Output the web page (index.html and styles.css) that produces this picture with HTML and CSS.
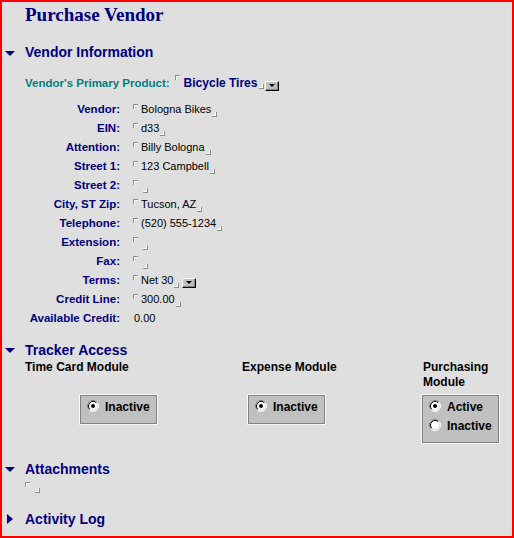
FILE: index.html
```html
<!DOCTYPE html>
<html>
<head>
<meta charset="utf-8">
<title>Purchase Vendor</title>
<link rel="stylesheet" href="styles.css">
</head>
<body>
<div class="page">
  <h1 class="title">Purchase Vendor</h1>

  <div class="sec-head sec-vendor"><span class="tri-down"></span><h2>Vendor Information</h2></div>
  <div class="product-row indent">
    <span class="product-label">Vendor's Primary Product:</span>
    <span class="m-start p-start"></span>
    <span class="product-value">Bicycle Tires</span>
    <span class="m-end p-end"></span>
    <span class="dd p-dd"></span>
  </div>

  <div class="form indent">
    <div class="lbl">Vendor:</div>
    <div class="val"><span class="m-start"></span><span class="txt">Bologna Bikes</span><span class="m-end"></span></div>
    <div class="lbl">EIN:</div>
    <div class="val"><span class="m-start"></span><span class="txt">d33</span><span class="m-end"></span></div>
    <div class="lbl">Attention:</div>
    <div class="val"><span class="m-start"></span><span class="txt">Billy Bologna</span><span class="m-end"></span></div>
    <div class="lbl">Street 1:</div>
    <div class="val"><span class="m-start"></span><span class="txt">123 Campbell</span><span class="m-end"></span></div>
    <div class="lbl">Street 2:</div>
    <div class="val"><span class="m-start"></span><span class="m-end empty"></span></div>
    <div class="lbl">City, ST Zip:</div>
    <div class="val"><span class="m-start"></span><span class="txt">Tucson, AZ</span><span class="m-end"></span></div>
    <div class="lbl">Telephone:</div>
    <div class="val"><span class="m-start"></span><span class="txt">(520) 555-1234</span><span class="m-end"></span></div>
    <div class="lbl">Extension:</div>
    <div class="val"><span class="m-start"></span><span class="m-end empty"></span></div>
    <div class="lbl">Fax:</div>
    <div class="val"><span class="m-start"></span><span class="m-end empty"></span></div>
    <div class="lbl">Terms:</div>
    <div class="val"><span class="m-start"></span><span class="txt">Net 30</span><span class="m-end"></span><span class="dd t-dd"></span></div>
    <div class="lbl">Credit Line:</div>
    <div class="val"><span class="m-start"></span><span class="txt">300.00</span><span class="m-end"></span></div>
    <div class="lbl">Available Credit:</div>
    <div class="val"><span class="txt plain">0.00</span></div>
  </div>

  <div class="sec-head sec-tracker"><span class="tri-down"></span><h2>Tracker Access</h2></div>
  <div class="modules indent">
    <div class="mod-head">Time Card Module</div>
    <div class="mod-head">Expense Module</div>
    <div class="mod-head mod3">Purchasing Module</div>

    <div class="rbox box1">
      <div class="ropt">
        <svg class="radio" width="12" height="12" viewBox="0 0 12 12"><circle cx="6" cy="6" r="5" fill="#fff"/><path d="M2.11 9.89A5.5 5.5 0 0 1 9.89 2.11" stroke="#808080" fill="none"/><path d="M9.89 2.11A5.5 5.5 0 0 1 2.11 9.89" stroke="#fff" fill="none"/><path d="M2.82 9.18A4.5 4.5 0 0 1 9.18 2.82" stroke="#000" fill="none"/><path d="M9.18 2.82A4.5 4.5 0 0 1 2.82 9.18" stroke="#dfdfdf" fill="none"/><circle cx="6" cy="6" r="2" fill="#000"/></svg>
        <span>Inactive</span>
      </div>
    </div>
    <div class="rbox box2">
      <div class="ropt">
        <svg class="radio" width="12" height="12" viewBox="0 0 12 12"><circle cx="6" cy="6" r="5" fill="#fff"/><path d="M2.11 9.89A5.5 5.5 0 0 1 9.89 2.11" stroke="#808080" fill="none"/><path d="M9.89 2.11A5.5 5.5 0 0 1 2.11 9.89" stroke="#fff" fill="none"/><path d="M2.82 9.18A4.5 4.5 0 0 1 9.18 2.82" stroke="#000" fill="none"/><path d="M9.18 2.82A4.5 4.5 0 0 1 2.82 9.18" stroke="#dfdfdf" fill="none"/><circle cx="6" cy="6" r="2" fill="#000"/></svg>
        <span>Inactive</span>
      </div>
    </div>
    <div class="rbox box3">
      <div class="ropt">
        <svg class="radio" width="12" height="12" viewBox="0 0 12 12"><circle cx="6" cy="6" r="5" fill="#fff"/><path d="M2.11 9.89A5.5 5.5 0 0 1 9.89 2.11" stroke="#808080" fill="none"/><path d="M9.89 2.11A5.5 5.5 0 0 1 2.11 9.89" stroke="#fff" fill="none"/><path d="M2.82 9.18A4.5 4.5 0 0 1 9.18 2.82" stroke="#000" fill="none"/><path d="M9.18 2.82A4.5 4.5 0 0 1 2.82 9.18" stroke="#dfdfdf" fill="none"/><circle cx="6" cy="6" r="2" fill="#000"/></svg>
        <span>Active</span>
      </div>
      <div class="ropt">
        <svg class="radio" width="12" height="12" viewBox="0 0 12 12"><circle cx="6" cy="6" r="5" fill="#fff"/><path d="M2.11 9.89A5.5 5.5 0 0 1 9.89 2.11" stroke="#808080" fill="none"/><path d="M9.89 2.11A5.5 5.5 0 0 1 2.11 9.89" stroke="#fff" fill="none"/><path d="M2.82 9.18A4.5 4.5 0 0 1 9.18 2.82" stroke="#000" fill="none"/><path d="M9.18 2.82A4.5 4.5 0 0 1 2.82 9.18" stroke="#dfdfdf" fill="none"/></svg>
        <span>Inactive</span>
      </div>
    </div>
  </div>

  <div class="sec-head sec-attach"><span class="tri-down"></span><h2>Attachments</h2></div>
  <div class="attach-row indent"><span class="m-start a-start"></span><span class="m-end a-end"></span></div>

  <div class="sec-head sec-log"><span class="tri-right"></span><h2>Activity Log</h2></div>
</div>
</body>
</html>
```

FILE: styles.css
```css
body {
  margin: 0;
  background: #dfdfdf;
}

.page {
  width: 514px;
  height: 538px;
  box-sizing: border-box;
  border: 2px solid #ff0000;
  background: #dfdfdf;
  padding-left: 3px;
  font-family: "Liberation Sans", Arial, sans-serif;
  overflow: hidden;
}

.indent {
  margin-left: 20px;
}

.title {
  margin: 2px 0 0 20px;
  font: bold 19px/22px "Liberation Serif", "Times New Roman", serif;
  color: #000080;
}

/* section headings */
.sec-head {
  display: flex;
  align-items: flex-start;
  height: 18px;
}
.sec-head h2 {
  margin: 0;
  font: bold 14px/18px "Liberation Sans", Arial, sans-serif;
  color: #000080;
}
.tri-down {
  width: 0;
  height: 0;
  border-left: 5px solid transparent;
  border-right: 5px solid transparent;
  border-top: 5px solid #000080;
  margin: 7px 10px 0 0;
}
.tri-right {
  width: 0;
  height: 0;
  border-top: 5.5px solid transparent;
  border-bottom: 5.5px solid transparent;
  border-left: 6px solid #000080;
  margin: 4px 12px 0 2px;
}
.sec-vendor { margin-top: 17px; }
.sec-vendor .tri-down { margin-top: 8px; }
.sec-tracker { margin-top: 13px; }
.sec-attach { margin-top: 16px; }
.sec-log { margin-top: 13px; }

/* field markers */
.m-start {
  display: block;
  flex: none;
  width: 4px;
  height: 4px;
  border-top: 1px solid #8c8c8c;
  border-left: 1px solid #8c8c8c;
  box-shadow: inset 1px 1px 0 #ffffff;
  margin: 4px 3px 0 0;
}
.m-end {
  display: block;
  flex: none;
  width: 4px;
  height: 4px;
  border-bottom: 1px solid #8c8c8c;
  border-right: 1px solid #8c8c8c;
  box-shadow: inset -1px -1px 0 #ffffff;
  margin: 12px 0 0 1px;
}
.m-end.empty { margin-left: 2px; }

/* dropdown button */
.dd {
  display: flex;
  flex: none;
  align-items: center;
  justify-content: center;
  width: 14px;
  height: 10px;
  box-sizing: border-box;
  background: #c0c0c0;
  border: 1px solid;
  border-color: #ffffff #000000 #000000 #ffffff;
  box-shadow: inset -1px -1px 0 #808080;
  margin-left: 2px;
}
.dd::after {
  content: "";
  width: 0;
  height: 0;
  border-left: 3px solid transparent;
  border-right: 3px solid transparent;
  border-top: 3px solid #000000;
  margin: 0 1px 1px 0;
}
.p-dd { margin-top: 7px; margin-left: 1px; }
.t-dd { margin-top: 7px; margin-left: 3px; }

/* primary product */
.product-row {
  display: flex;
  align-items: flex-start;
  height: 19px;
  margin-top: 13px;
  line-height: 19px;
}
.product-label {
  font-weight: bold;
  font-size: 11.5px;
  color: #008080;
}
.product-value {
  font-weight: bold;
  font-size: 12px;
  color: #000080;
}
.p-start { margin: 1px 4px 0 5px; }
.p-end { margin-top: 10px; margin-left: 2px; }

/* form */
.form {
  display: grid;
  grid-template-columns: 95px 1fr;
  column-gap: 13px;
  grid-auto-rows: 19px;
  margin-top: 7px;
  line-height: 19px;
}
.lbl {
  text-align: right;
  font-weight: bold;
  font-size: 11.5px;
  color: #000080;
  white-space: nowrap;
}
.val {
  display: flex;
  align-items: flex-start;
  font-size: 11px;
  color: #000000;
}
.txt {
  white-space: nowrap;
}
.txt.plain {
  margin-left: 1px;
}

/* tracker modules */
.modules {
  display: grid;
  grid-template-columns: 217px 179px 1fr;
  align-items: start;
  margin-top: 1px;
}
.mod-head {
  font-weight: bold;
  font-size: 12px;
  line-height: 15px;
  color: #000000;
}
.mod3 {
  padding-left: 2px;
}
.rbox {
  width: 79px;
  box-sizing: border-box;
  margin-top: 4px;
  border: 1px solid #f8f8f8;
  box-shadow: inset 0 0 0 1px #808080;
  background: #c0c0c0;
  padding: 2px 6px 8px 7px;
}
.box1 { margin-left: 54px; }
.box2 { margin-left: 5px; }
.box3 { margin-left: 0; }
.ropt {
  display: flex;
  align-items: center;
  height: 19px;
  font-weight: bold;
  font-size: 12px;
  color: #000000;
}
.radio {
  flex: none;
  display: block;
  margin: 0 6px 1px 0;
}

/* attachments */
.attach-row {
  display: flex;
  align-items: flex-start;
  height: 19px;
}
.a-start { margin-top: 4px; }
.a-end { margin-top: 10px; margin-left: 2px; }
```
